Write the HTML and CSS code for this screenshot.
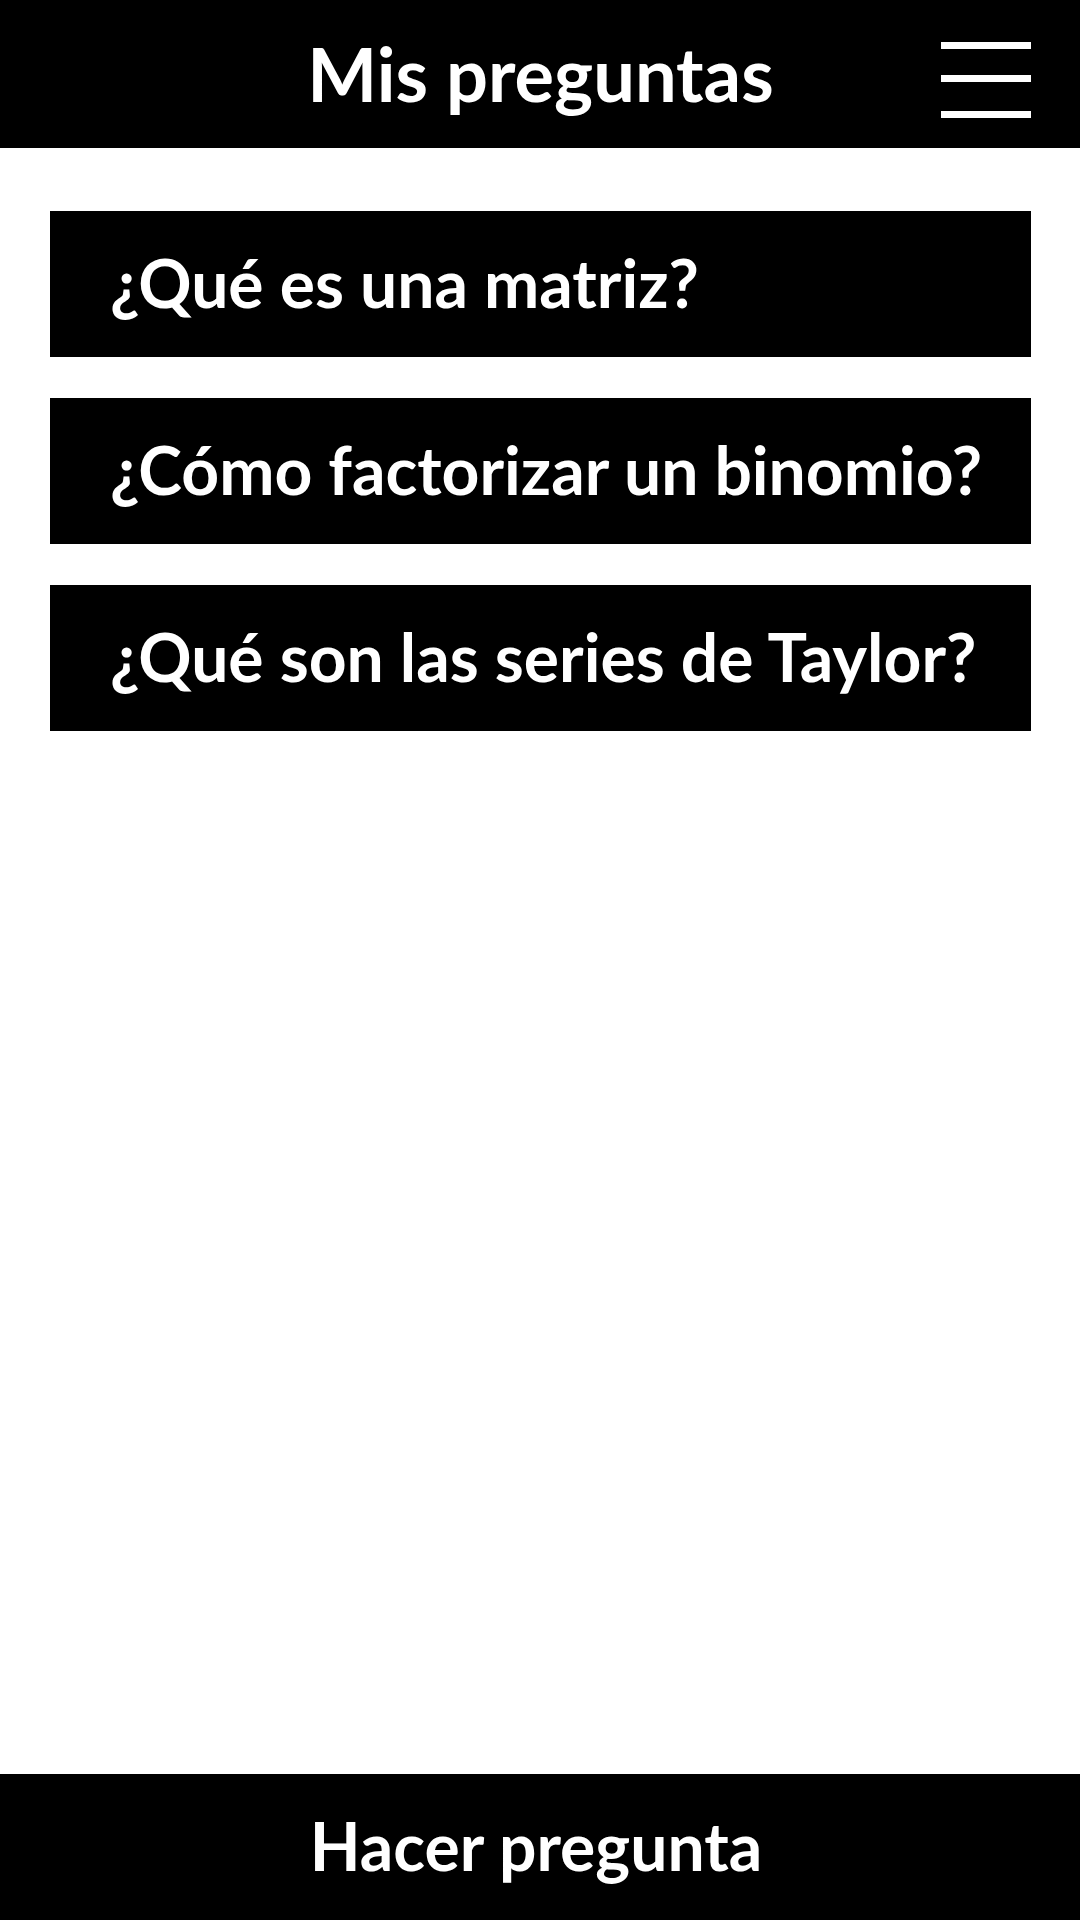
FILE: index.html
```html
<!DOCTYPE html>
<html lang="es">
<head>
<meta charset="utf-8">
<meta name="viewport" content="width=device-width, initial-scale=1">
<title>Mis preguntas</title>
<link rel="stylesheet" href="styles.css">
</head>
<body>
<header class="topbar">
  <h1 class="title">Mis preguntas</h1>
  <button class="menu" type="button" aria-label="Menú">
    <svg class="menu-icon" viewBox="0 0 90 76" aria-hidden="true"><path d="M0 3.5H90M0 36.5H90M0 72.5H90" stroke="currentColor" stroke-width="7"/></svg>
  </button>
</header>
<main class="content">
  <ul class="questions">
    <li><a class="question" href="#matriz">¿Qué es una matriz?</a></li>
    <li><a class="question" href="#binomio">¿Cómo factorizar un binomio?</a></li>
    <li><a class="question" href="#taylor">¿Qué son las series de Taylor?</a></li>
  </ul>
</main>
<button class="ask" type="button">Hacer pregunta</button>
</body>
</html>
```
FILE: styles.css
```css
* { box-sizing: border-box; }
body {
  display: flex;
  flex-direction: column;
  min-height: 100vh;
  margin: 0;
  background: #fff;
  color: #fff;
  font-family: "Lato", sans-serif;
  font-weight: 700;
}
.topbar {
  display: grid;
  grid-template-columns: 90px 1fr 90px;
  align-items: center;
  padding: 26px 49px 26px 50px;
  background: #000;
}
.title {
  grid-column: 2;
  margin: 0;
  font-size: 74px;
  line-height: 96px;
  text-align: center;
}
.menu {
  display: flex;
  padding: 12px 0 0;
  border: 0;
  background: none;
  color: inherit;
}
.menu-icon { width: 90px; height: 76px; }
.content {
  flex: 1;
  padding: 63px 49px 64px 50px;
}
.questions {
  display: grid;
  gap: 41px;
  margin: 0;
  padding: 0;
  list-style: none;
}
.question {
  display: block;
  padding: 32px 48px 34px 60px;
  background: #000;
  color: inherit;
  font-size: 66px;
  line-height: 80px;
  text-decoration: none;
}
.ask {
  padding: 32px 52px 34px 44px;
  border: 0;
  background: #000;
  color: inherit;
  font: inherit;
  font-size: 66px;
  line-height: 80px;
}
```
